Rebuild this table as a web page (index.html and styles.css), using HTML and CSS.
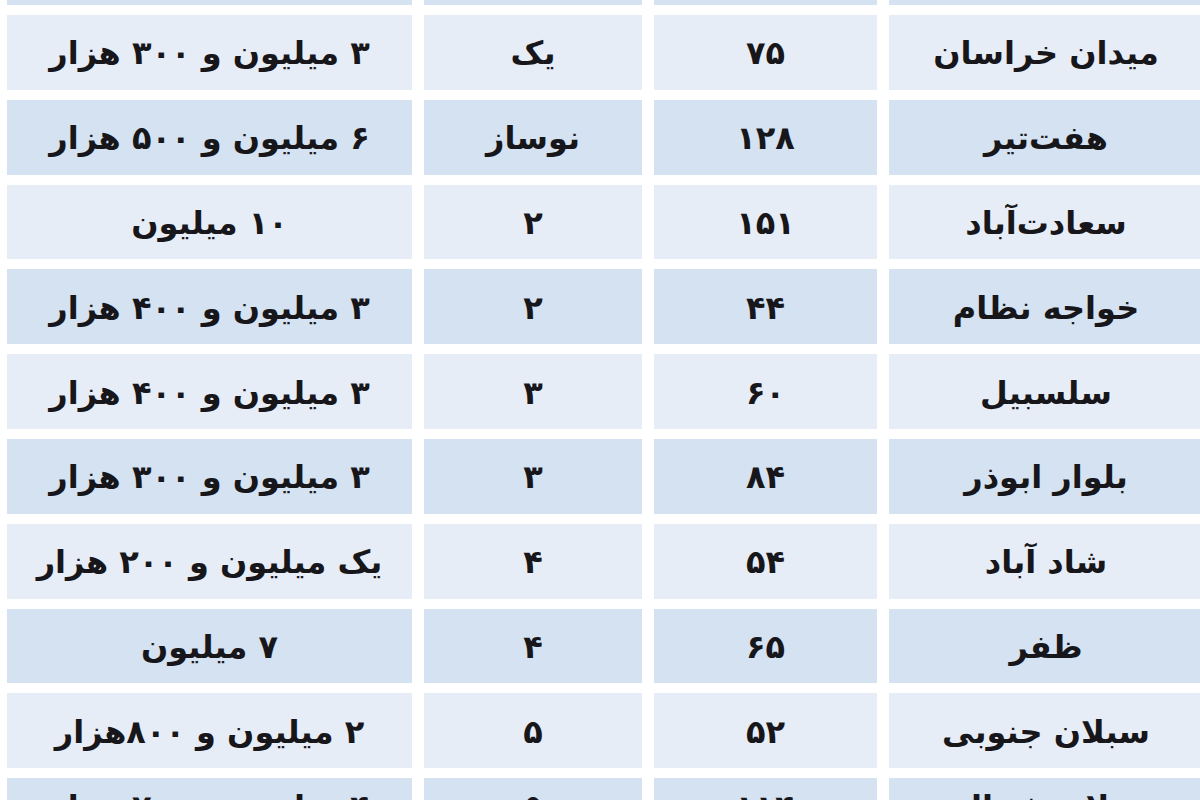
FILE: index.html
```html
<!DOCTYPE html>
<html lang="fa" dir="rtl">
<head>
<meta charset="utf-8">
<title>جدول اجاره</title>
<link rel="stylesheet" href="styles.css">
</head>
<body>
<div class="table">
  <div class="cell dark"></div><div class="cell dark"></div><div class="cell dark"></div><div class="cell dark"></div>

  <div class="cell light">میدان خراسان</div><div class="cell light">۷۵</div><div class="cell light">یک</div><div class="cell light">۳ میلیون و ۳۰۰ هزار</div>
  <div class="cell dark">هفت‌تیر</div><div class="cell dark">۱۲۸</div><div class="cell dark">نوساز</div><div class="cell dark">۶ میلیون و ۵۰۰ هزار</div>
  <div class="cell light">سعادت‌آباد</div><div class="cell light">۱۵۱</div><div class="cell light">۲</div><div class="cell light">۱۰ میلیون</div>
  <div class="cell dark">خواجه نظام</div><div class="cell dark">۴۴</div><div class="cell dark">۲</div><div class="cell dark">۳ میلیون و ۴۰۰ هزار</div>
  <div class="cell light">سلسبیل</div><div class="cell light">۶۰</div><div class="cell light">۳</div><div class="cell light">۳ میلیون و ۴۰۰ هزار</div>
  <div class="cell dark">بلوار ابوذر</div><div class="cell dark">۸۴</div><div class="cell dark">۳</div><div class="cell dark">۳ میلیون و ۳۰۰ هزار</div>
  <div class="cell light">شاد آباد</div><div class="cell light">۵۴</div><div class="cell light">۴</div><div class="cell light">یک میلیون و ۲۰۰ هزار</div>
  <div class="cell dark">ظفر</div><div class="cell dark">۶۵</div><div class="cell dark">۴</div><div class="cell dark">۷ میلیون</div>
  <div class="cell light">سبلان جنوبی</div><div class="cell light">۵۲</div><div class="cell light">۵</div><div class="cell light">۲ میلیون و ۸۰۰هزار</div>
  <div class="cell dark last">سبلان شمالی</div><div class="cell dark last">۱۱۴</div><div class="cell dark last">۵</div><div class="cell dark last">۴ میلیون و ۷۰۰ هزار</div>
</div>
</body>
</html>
```
FILE: styles.css
```css
html, body {
  margin: 0;
  padding: 0;
  background: #ffffff;
  overflow: hidden;
}

body {
  width: 1200px;
  height: 800px;
  font-family: "DejaVu Sans", sans-serif;
}

.table {
  direction: rtl;
  display: grid;
  grid-template-columns: 314px 223px 218px 405px;
  grid-auto-rows: 74.8px;
  column-gap: 12px;
  row-gap: 10px;
  margin-top: -69.8px;
  margin-right: -3px;
  margin-left: 7px;
  width: 1196px;
}

.cell {
  display: flex;
  align-items: center;
  justify-content: center;
  font-size: 32px;
  font-weight: bold;
  color: #17171b;
  white-space: nowrap;
  overflow: hidden;
  padding-top: 2px;
  box-sizing: border-box;
}

.cell.last {
  padding-top: 0;
  padding-bottom: 18px;
}

.light {
  background: #e7edf6;
}

.dark {
  background: #d4e2f1;
}
```
